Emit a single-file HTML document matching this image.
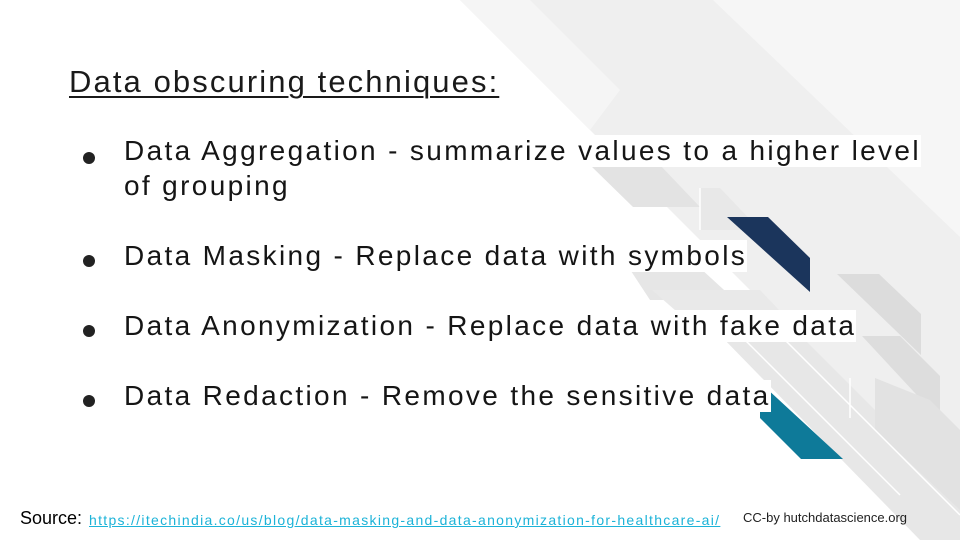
<!DOCTYPE html>
<html><head><meta charset="utf-8"><style>
html,body{margin:0;padding:0}
body{width:960px;height:540px;position:relative;overflow:hidden;background:#fff;font-family:"Liberation Sans",sans-serif}
svg.bg{position:absolute;left:0;top:0}
.t{position:absolute;white-space:nowrap;color:#111}
.w{background:#fff}
.title{left:69px;top:64px;font-size:31px;text-decoration:underline;text-decoration-thickness:2px;text-underline-offset:4px;color:#1a1a1a;letter-spacing:2.1px}
.b{font-size:28px;letter-spacing:2.35px;color:#151515}
.dot{position:absolute;width:12px;height:12px;border-radius:50%;background:#222}
</style></head><body>
<svg class="bg" width="960" height="540" viewBox="0 0 960 540">
<polygon points="460,0 960,0 960,500" fill="#efefef"/>
<polygon points="713,0 960,0 960,237" fill="#f6f6f6"/>
<polygon points="460,0 530,0 620,90 590,130" fill="#f5f5f5"/>
<polygon points="590,165 660,165 700,207 633,207" fill="#e3e3e3"/>
<polygon points="700,188 720,188 760,230 700,230" fill="#e8e8e8"/>
<polygon points="629,268 700,268 735,300 650,300" fill="#e6e6e6"/>
<polygon points="652,290 760,290 800,332 700,332" fill="#e9e9e9"/>
<polygon points="720,335 800,335 960,495 960,540 920,540" fill="#e7e7e7"/>
<polygon points="837,274 879,274 921,314 921,355" fill="#dcdcdc"/>
<polygon points="862,336 900,336 940,376 940,420" fill="#dddddd"/>
<polygon points="875,378 930,400 960,430 960,510 875,430" fill="#e2e2e2"/>
<line x1="700" y1="188" x2="700" y2="230" stroke="#fff" stroke-width="1.5"/>
<line x1="740" y1="335" x2="900" y2="495" stroke="#fff" stroke-width="1.5"/>
<line x1="780" y1="335" x2="960" y2="515" stroke="#fff" stroke-width="1.5"/>
<line x1="850" y1="378" x2="850" y2="418" stroke="#fff" stroke-width="1.5"/>
<polygon points="727,217 768,217 810,258 810,292" fill="#1b355c"/>
<polygon points="765,387 760,402 760,418 801,459 843,459" fill="#0e7a99"/>
</svg>
<div class="t title w">Data obscuring techniques:</div>
<div class="dot" style="left:83px;top:152px"></div>
<div class="t b w" style="left:124px;top:135px">Data Aggregation - summarize values to a higher level</div>
<div class="t b" style="left:124px;top:170px">of grouping</div>
<div class="dot" style="left:83px;top:255px"></div>
<div class="t b w" style="left:124px;top:240px">Data Masking - Replace data with symbols</div>
<div class="dot" style="left:83px;top:325px"></div>
<div class="t b w" style="left:124px;top:310px">Data Anonymization - Replace data with fake data</div>
<div class="dot" style="left:83px;top:395px"></div>
<div class="t b w" style="left:124px;top:380px">Data Redaction - Remove the sensitive data</div>
<div class="t" style="left:20px;top:508px;font-size:18px;color:#000">Source:</div>
<div class="t" style="left:89px;top:512px;font-size:14px;color:#1cb3d8;text-decoration:underline;letter-spacing:1.3px">https://itechindia.co/us/blog/data-masking-and-data-anonymization-for-healthcare-ai/</div>
<div class="t" style="left:743px;top:510px;font-size:13px;color:#222">CC-by hutchdatascience.org</div>
</body></html>
